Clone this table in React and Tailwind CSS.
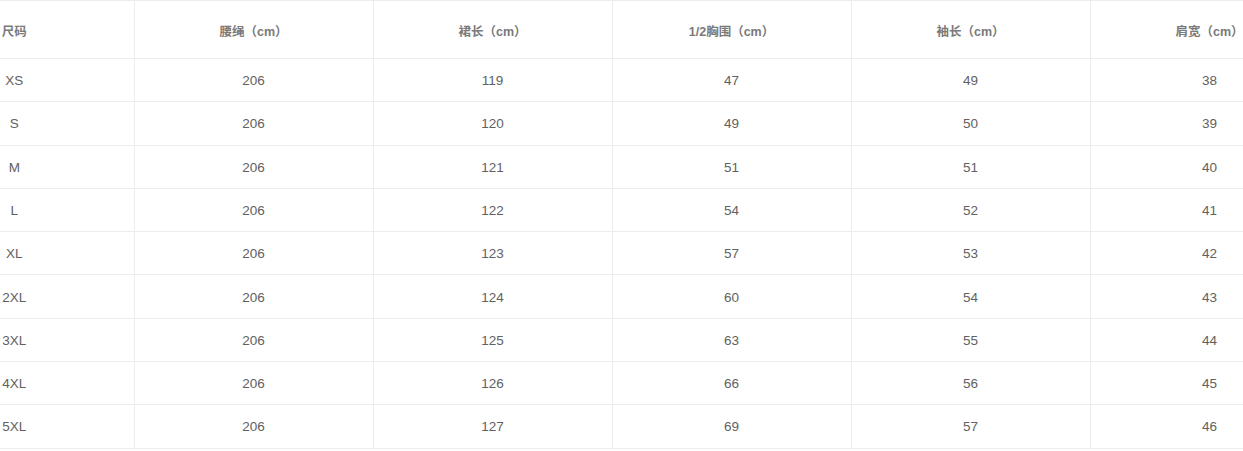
const headers = ["尺码", "腰绳（cm）", "裙长（cm）", "1/2胸围（cm）", "袖长（cm）", "肩宽（cm）"];

const rows = [
    ["XS", 206, 119, 47, 49, 38],
    ["S", 206, 120, 49, 50, 39],
    ["M", 206, 121, 51, 51, 40],
    ["L", 206, 122, 54, 52, 41],
    ["XL", 206, 123, 57, 53, 42],
    ["2XL", 206, 124, 60, 54, 43],
    ["3XL", 206, 125, 63, 55, 44],
    ["4XL", 206, 126, 66, 56, 45],
    ["5XL", 206, 127, 69, 57, 46],
];

export default function App() {
    return (
        <div
            className="w-[1243px] h-[451px] overflow-hidden bg-white"
            style={{ fontFamily: '"Liberation Sans", "Noto Sans CJK SC", sans-serif' }}
        >
            <table className="ml-[-105px] border-collapse table-fixed w-[1434px]">
                <thead>
                    <tr className="h-[58px] border-t border-b border-[#ececec]">
                        {headers.map((h) => (
                            <th
                                key={h}
                                className="w-[239px] border-r border-[#ececec] text-center text-[12.5px] font-bold text-[#7a7a7a] p-0 pt-[6px]"
                            >
                                {h}
                            </th>
                        ))}
                    </tr>
                </thead>
                <tbody>
                    {rows.map((row) => (
                        <tr key={row[0]} className="h-[43.3px] border-b border-[#ececec]">
                            {row.map((cell, i) => (
                                <td
                                    key={i}
                                    className="border-r border-[#ececec] text-center text-[13.5px] text-[#616161] p-0 pt-[2px]"
                                >
                                    {cell}
                                </td>
                            ))}
                        </tr>
                    ))}
                </tbody>
            </table>
        </div>
    );
}
